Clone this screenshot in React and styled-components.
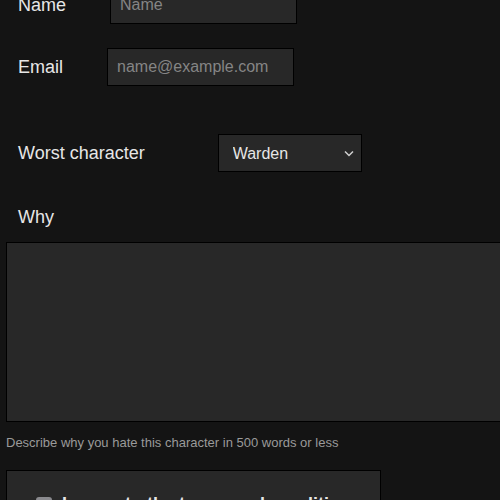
import React from 'react';
import styled, { createGlobalStyle } from 'styled-components';

const GlobalStyle = createGlobalStyle`
  html, body {
    margin: 0;
    padding: 0;
    background: #141414;
    overflow: hidden;
  }
  body {
    font-family: "Liberation Sans", Arial, sans-serif;
    color: #e6e6e6;
  }
`;

const StyledForm = styled.form`
  display: flex;
  flex-direction: column;
  align-items: flex-start;
  margin-top: -14px;
  padding-left: 6px;
`;

const Row = styled.div`
  display: flex;
  align-items: center;
  padding-left: 12px;
  margin-bottom: ${(p) => p.gap || 0}px;
`;

const Label = styled.label`
  font-size: 18px;
  color: #e6e6e6;
  margin-right: ${(p) => p.gap || 0}px;
`;

const BlockLabel = styled.label`
  display: block;
  font-size: 18px;
  line-height: 21px;
  color: #e6e6e6;
  padding-left: 12px;
  margin-bottom: 14px;
`;

const StyledInput = styled.input`
  box-sizing: border-box;
  width: 187px;
  height: 38px;
  padding: 0 9px;
  background: #282828;
  border: 1px solid #000;
  color: #e6e6e6;
  font-family: inherit;
  font-size: 16px;
  outline: none;

  &::placeholder {
    color: #858585;
  }
`;

const SelectWrap = styled.div`
  position: relative;
  width: 144px;
  height: 38px;
`;

const StyledSelect = styled.select`
  appearance: none;
  box-sizing: border-box;
  width: 100%;
  height: 100%;
  padding: 0 14px;
  background: #282828;
  border: 1px solid #000;
  border-radius: 0;
  color: #e6e6e6;
  font-family: inherit;
  font-size: 16px;
  outline: none;
`;

const Chevron = styled.svg`
  position: absolute;
  right: 8px;
  top: 16px;
  pointer-events: none;
`;

const StyledTextarea = styled.textarea`
  display: block;
  box-sizing: border-box;
  width: 540px;
  height: 180px;
  background: #282828;
  border: 1px solid #000;
  resize: none;
  outline: none;
`;

const Hint = styled.div`
  margin-top: 13px;
  font-size: 13px;
  line-height: 15px;
  color: #9a9a9a;
`;

const TermsBox = styled.div`
  box-sizing: border-box;
  width: 375px;
  margin-top: 20px;
  padding: 23px 12px 23px 29px;
  background: #282828;
  border: 1px solid #000;
  display: flex;
  align-items: center;
  gap: 10px;
`;

const Checkbox = styled.span`
  width: 16px;
  height: 16px;
  border-radius: 3px;
  background: #8a8a8e;
  flex: none;
`;

const TermsText = styled.span`
  font-size: 18px;
  line-height: 21px;
  font-weight: bold;
  white-space: nowrap;
  color: #e6e6e6;
`;

export default function App() {
  return (
    <>
      <GlobalStyle />
      <StyledForm onSubmit={(e) => e.preventDefault()}>
        <Row gap={24}>
          <Label htmlFor="name" gap={44}>Name</Label>
          <StyledInput id="name" type="text" placeholder="Name" />
        </Row>
        <Row gap={48}>
          <Label htmlFor="email" gap={44}>Email</Label>
          <StyledInput id="email" type="email" placeholder="name@example.com" />
        </Row>
        <Row gap={35}>
          <Label htmlFor="worst" gap={73}>Worst character</Label>
          <SelectWrap>
            <StyledSelect id="worst" defaultValue="Warden">
              <option>Warden</option>
            </StyledSelect>
            <Chevron width="10" height="7" viewBox="0 0 10 7">
              <path d="M1 1.5 L5 5.5 L9 1.5" fill="none" stroke="#d0d0d0" strokeWidth="1.5" />
            </Chevron>
          </SelectWrap>
        </Row>
        <BlockLabel htmlFor="why">Why</BlockLabel>
        <StyledTextarea id="why" />
        <Hint>Describe why you hate this character in 500 words or less</Hint>
        <TermsBox>
          <Checkbox />
          <TermsText>I agree to the terms and conditions</TermsText>
        </TermsBox>
      </StyledForm>
    </>
  );
}
